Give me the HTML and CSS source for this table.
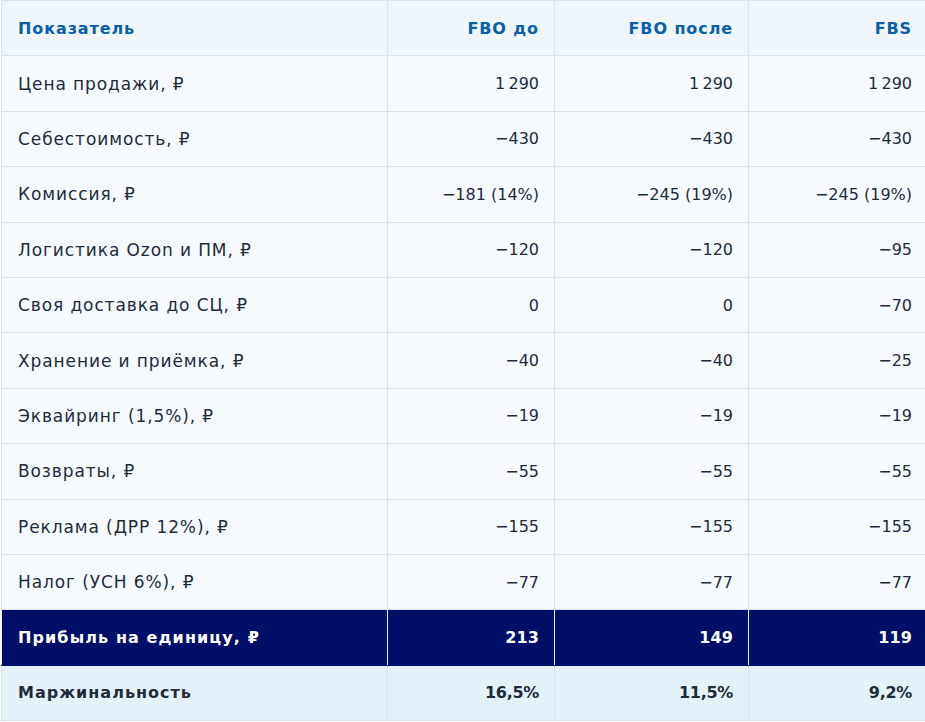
FILE: index.html
```html
<!DOCTYPE html>
<html lang="ru">
<head>
<meta charset="utf-8">
<title>Сравнение FBO и FBS</title>
<link rel="stylesheet" href="styles.css">
</head>
<body>
<div class="wrap">
<table class="cmp">
  <colgroup>
    <col class="c1"><col class="c2"><col class="c3"><col class="c4">
  </colgroup>
  <thead>
    <tr><th>Показатель</th><th class="num">FBO до</th><th class="num">FBO после</th><th class="num">FBS</th></tr>
  </thead>
  <tbody>
    <tr><td>Цена продажи, ₽</td><td class="num">1&#8239;290</td><td class="num">1&#8239;290</td><td class="num">1&#8239;290</td></tr>
    <tr><td>Себестоимость, ₽</td><td class="num">−430</td><td class="num">−430</td><td class="num">−430</td></tr>
    <tr><td>Комиссия, ₽</td><td class="num">−181 (14%)</td><td class="num">−245 (19%)</td><td class="num">−245 (19%)</td></tr>
    <tr><td>Логистика Ozon и ПМ, ₽</td><td class="num">−120</td><td class="num">−120</td><td class="num">−95</td></tr>
    <tr><td>Своя доставка до СЦ, ₽</td><td class="num">0</td><td class="num">0</td><td class="num">−70</td></tr>
    <tr><td>Хранение и приёмка, ₽</td><td class="num">−40</td><td class="num">−40</td><td class="num">−25</td></tr>
    <tr><td>Эквайринг (1,5%), ₽</td><td class="num">−19</td><td class="num">−19</td><td class="num">−19</td></tr>
    <tr><td>Возвраты, ₽</td><td class="num">−55</td><td class="num">−55</td><td class="num">−55</td></tr>
    <tr><td>Реклама (ДРР 12%), ₽</td><td class="num">−155</td><td class="num">−155</td><td class="num">−155</td></tr>
    <tr><td>Налог (УСН 6%), ₽</td><td class="num">−77</td><td class="num">−77</td><td class="num">−77</td></tr>
    <tr class="profit"><td>Прибыль на единицу, ₽</td><td class="num">213</td><td class="num">149</td><td class="num">119</td></tr>
    <tr class="margin"><td>Маржинальность</td><td class="num">16,5%</td><td class="num">11,5%</td><td class="num">9,2%</td></tr>
  </tbody>
</table>
</div>
</body>
</html>
```
FILE: styles.css
```css
html, body {
  margin: 0;
  padding: 0;
  background: #ffffff;
}
.wrap {
  padding-left: 1px;
  width: 940px;
}
.cmp {
  border-collapse: collapse;
  width: 926px;
  table-layout: fixed;
  font-family: "DejaVu Sans", "Noto Sans", sans-serif;
  font-size: 16px;
  color: #1f2b3a;
}
.c1 { width: 386px; }
.c2 { width: 167px; }
.c3 { width: 194px; }
.c4 { width: 179px; }
.cmp th,
.cmp td {
  border: 1px solid #d9e4ee;
  height: 54.4px;
  padding: 0 15px 0 16px;
  text-align: left;
  vertical-align: middle;
  white-space: nowrap;
}
.cmp thead th {
  background: #eef6fb;
  color: #0b5ea8;
  font-weight: 700;
  font-size: 16px;
  letter-spacing: 0.9px;
}
.cmp tbody td {
  background: #f6fafe;
  font-weight: 400;
  font-size: 17px;
  letter-spacing: 0.9px;
}
.cmp tbody td.num {
  font-size: 16px;
  letter-spacing: 0;
}
.cmp .num { text-align: right; }
.cmp .profit td {
  background: #000f68;
  color: #ffffff;
  font-weight: 700;
  font-size: 16px;
  letter-spacing: 1.1px;
  border-color: #000f68 #e8eef6;
}
.cmp .profit td.num {
  letter-spacing: 0.1px;
}
.cmp .margin td {
  background: #e5f1f9;
  font-weight: 700;
  font-size: 16px;
  letter-spacing: 1px;
}
.cmp .margin td.num {
  letter-spacing: -0.3px;
}
```
